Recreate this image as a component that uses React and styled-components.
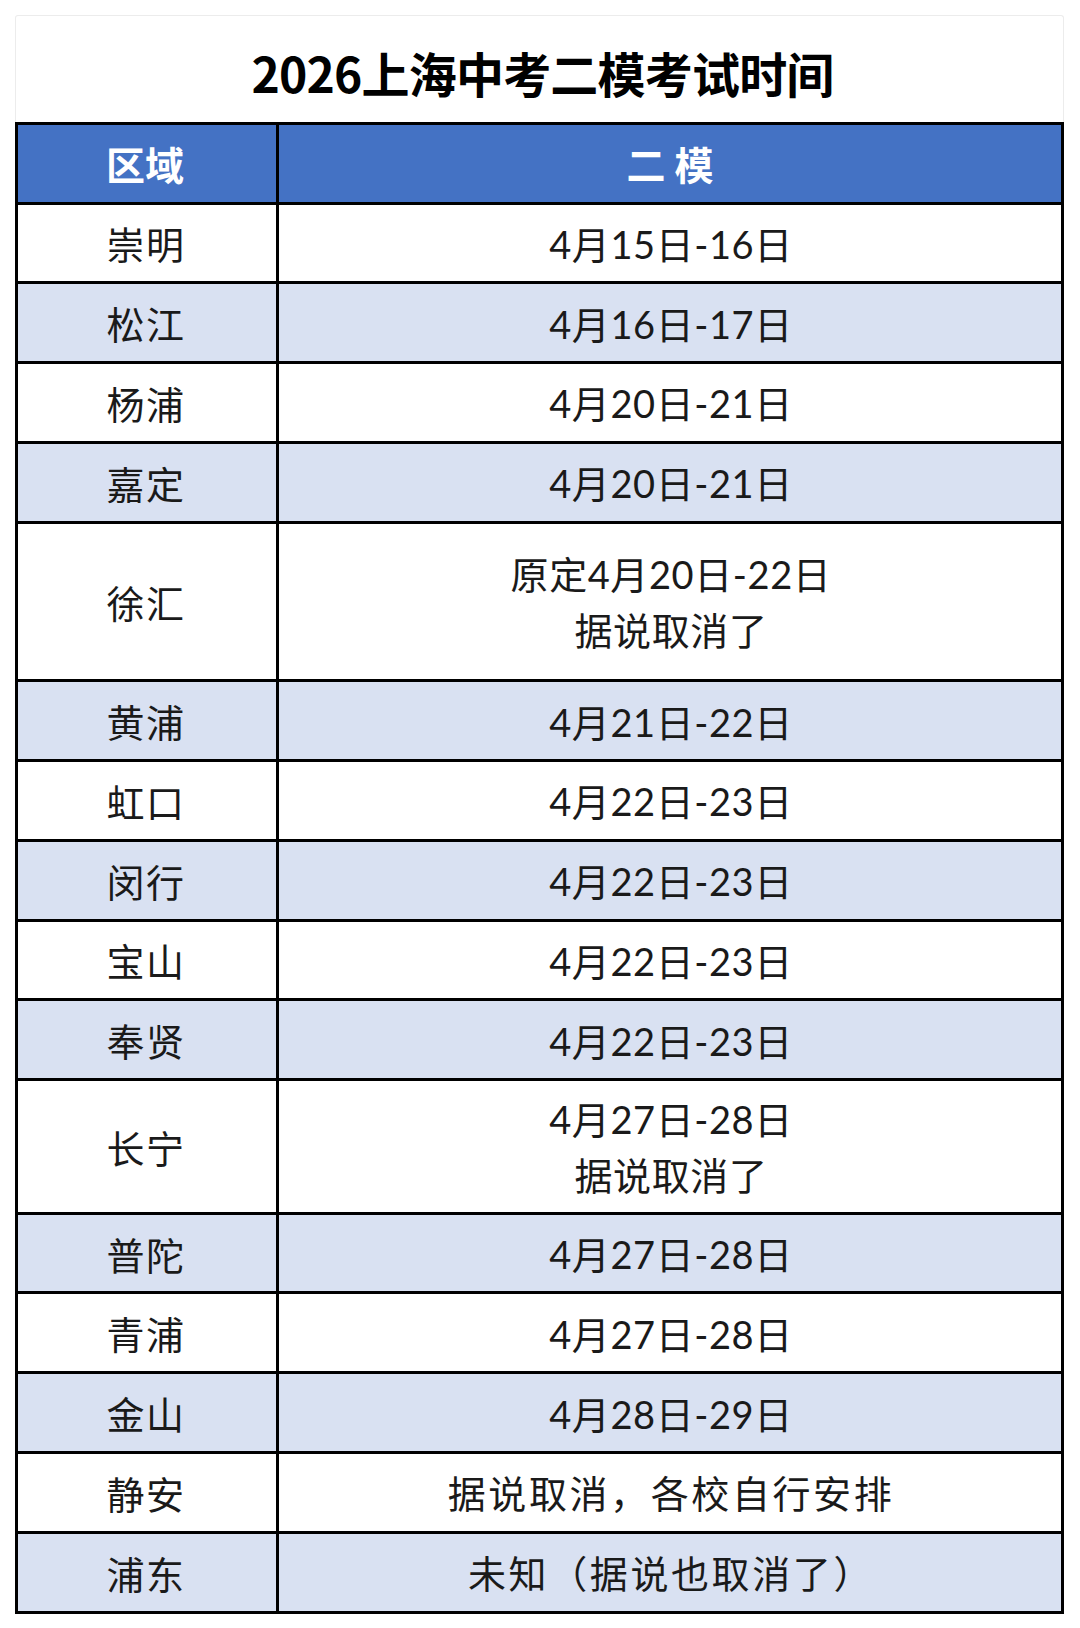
import React from "react"
import styled, { createGlobalStyle } from "styled-components"

const rows = [
    { area: "崇明", lines: ["4月15日-16日"] },
    { area: "松江", lines: ["4月16日-17日"] },
    { area: "杨浦", lines: ["4月20日-21日"] },
    { area: "嘉定", lines: ["4月20日-21日"] },
    { area: "徐汇", lines: ["原定4月20日-22日", "据说取消了"], size: "tall" },
    { area: "黄浦", lines: ["4月21日-22日"] },
    { area: "虹口", lines: ["4月22日-23日"] },
    { area: "闵行", lines: ["4月22日-23日"] },
    { area: "宝山", lines: ["4月22日-23日"] },
    { area: "奉贤", lines: ["4月22日-23日"] },
    { area: "长宁", lines: ["4月27日-28日", "据说取消了"], size: "mid" },
    { area: "普陀", lines: ["4月27日-28日"] },
    { area: "青浦", lines: ["4月27日-28日"] },
    { area: "金山", lines: ["4月28日-29日"] },
    { area: "静安", lines: ["据说取消，各校自行安排"], wide: true },
    { area: "浦东", lines: ["未知（据说也取消了）"], wide: true },
]

const heights = { tall: "158.5px", mid: "133.5px", normal: "79.8px" }

const App = () => {
    return (
        <Page>
            <GlobalStyle />
            <Sheet>
                <TitleBand>
                    <Title>2026上海中考二模考试时间</Title>
                </TitleBand>
                <Table>
                    <HeadRow>
                        <HeadCell $first>区域</HeadCell>
                        <HeadCell>二 模</HeadCell>
                    </HeadRow>
                    {rows.map((r, i) => (
                        <Row key={r.area} $shaded={i % 2 === 1} $size={r.size || "normal"}>
                            <AreaCell>{r.area}</AreaCell>
                            <DateCell>
                                {r.lines.map(l => <Line key={l} $wide={r.wide}>{l}</Line>)}
                            </DateCell>
                        </Row>
                    ))}
                </Table>
            </Sheet>
        </Page>
    )
}

export default App

const GlobalStyle = createGlobalStyle`
    html, body {
        margin: 0;
        padding: 0;
        background: #fff;
    }
`
const Page = styled.div`
    width: 1080px;
    height: 1628px;
    background: #fff;
    padding: 15px 0 0 15px;
    box-sizing: border-box;
`
const Sheet = styled.div`
    width: 1049px;
`
const TitleBand = styled.div`
    height: 107px;
    box-sizing: border-box;
    border: 1px solid #ececec;
    border-bottom: none;
    border-radius: 3px 3px 0 0;
    display: flex;
    align-items: center;
    justify-content: center;
`
const Title = styled.div`
    font-family: "Noto Sans CJK SC", sans-serif;
    font-weight: 700;
    font-size: 48px;
    color: #000;
    margin-top: 6px;
    margin-left: 6px;
    letter-spacing: -0.8px;
`
const Table = styled.div`
    border: 3px solid #000;
    border-bottom: none;
`
const HeadRow = styled.div`
    display: grid;
    grid-template-columns: 261px 1fr;
    height: 79.5px;
    box-sizing: border-box;
    border-bottom: 3.5px solid #000;
    background: #4472c4;
`
const HeadCell = styled.div`
    display: flex;
    align-items: center;
    justify-content: center;
    font-family: "Noto Sans CJK SC", sans-serif;
    font-weight: 700;
    font-size: 39px;
    color: #fff;
    border-right: ${p => (p.$first ? "3px solid #000" : "none")};
    padding-right: ${p => (p.$first ? "4px" : "0")};
    white-space: pre;
`
const Row = styled.div`
    display: grid;
    grid-template-columns: 261px 1fr;
    height: ${p => heights[p.$size]};
    box-sizing: border-box;
    border-bottom: 3px solid #000;
    background: ${p => (p.$shaded ? "#d9e1f2" : "#fff")};
`
const AreaCell = styled.div`
    display: flex;
    align-items: center;
    justify-content: center;
    border-right: 3px solid #000;
    font-family: "Noto Sans CJK SC", sans-serif;
    font-size: 38px;
    color: #1a1a1a;
    letter-spacing: 1.5px;
    padding-right: 2px;
`
const DateCell = styled.div`
    display: flex;
    flex-direction: column;
    align-items: center;
    justify-content: center;
    padding-left: 2px;
    padding-top: 2px;
`
const Line = styled.div`
    font-family: "Lato", "Noto Sans CJK SC", sans-serif;
    font-size: 38px;
    line-height: 56px;
    color: #1a1a1a;
    letter-spacing: ${p => (p.$wide ? "2.6px" : "0.6px")};
`
